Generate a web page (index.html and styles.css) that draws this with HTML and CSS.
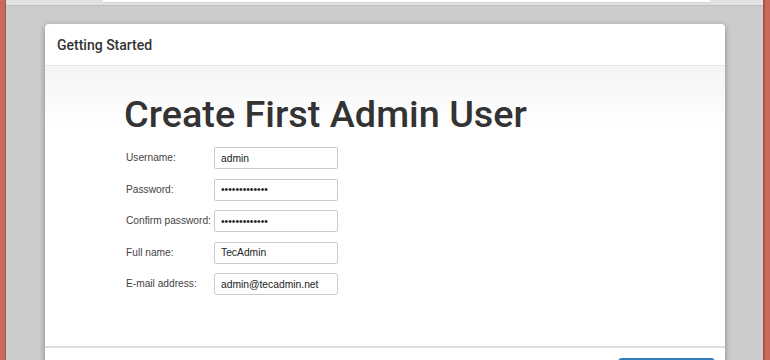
FILE: index.html
```html
<!DOCTYPE html>
<html lang="en">

<head>
    <meta charset="UTF-8">
    <meta name="viewport" content="width=device-width, initial-scale=1.0">
    <title>Getting Started</title>
    <link rel="stylesheet" href="styles.css">
</head>

<body>
    <div class="window">
        <div class="toolbar">
            <div class="urlbar"></div>
        </div>

        <div class="dialog">
            <div class="dialog-header">Getting Started</div>

            <div class="dialog-body">
                <h1>Create First Admin User</h1>

                <form class="admin-form">
                    <label for="username">Username:</label>
                    <input type="text" id="username" value="admin">

                    <label for="password1">Password:</label>
                    <input type="password" id="password1" value="tecadmin12345">

                    <label for="password2">Confirm password:</label>
                    <input type="password" id="password2" value="tecadmin12345">

                    <label for="fullname">Full name:</label>
                    <input type="text" id="fullname" value="TecAdmin">

                    <label for="email">E-mail address:</label>
                    <input type="text" id="email" value="admin@tecadmin.net">
                </form>
            </div>

            <div class="dialog-footer">
                <!-- tombol simpan, hanya bagian atasnya yang terlihat -->
                <button class="save-btn" aria-label="Save and Finish"></button>
            </div>
        </div>
    </div>
</body>

</html>
```

FILE: styles.css
```css
/* halaman setup admin */
body {
    margin: 0;
    height: 360px;
    overflow: hidden;
    background-color: #c86a5b;
    font-family: "Liberation Sans", Arial, sans-serif;
}

.window {
    margin: 0 5px;
    height: 360px;
    overflow: hidden;
    background-color: #cccccc;
    border-left: 1px solid #a85548;
    border-right: 2px solid #a85548;
    box-sizing: border-box;
}

.toolbar {
    height: 5px;
    background-color: #e2e2e2;
    border-bottom: 1px solid #c0c0c0;
}

.urlbar {
    margin-left: 97px;
    width: 607px;
    height: 2px;
    background-color: #ffffff;
    border-bottom: 1px solid #d6d6d6;
}

.dialog {
    margin: 18px 38px 0 39px;
    background-color: #ffffff;
    border-radius: 4px 4px 0 0;
    box-shadow: 0 2px 6px rgba(0, 0, 0, 0.35);
}

.dialog-header {
    height: 41px;
    padding: 0 12px;
    display: flex;
    align-items: center;
    font-family: Roboto, "Liberation Sans", sans-serif;
    font-size: 14px;
    font-weight: 500;
    color: #333333;
    border-bottom: 1px solid #e5e5e5;
}

.dialog-body {
    height: 280px;
    padding: 0 0 0 79px;
    box-sizing: border-box;
    background: linear-gradient(to bottom, #f4f4f4 0px, #ffffff 60px);
}

.dialog-body h1 {
    margin: 0;
    padding-top: 25px;
    font-family: Roboto, "Liberation Sans", sans-serif;
    font-size: 37.8px;
    font-weight: 500;
    line-height: 46px;
    color: #333333;
}

.admin-form {
    display: grid;
    grid-template-columns: 88px 124px;
    row-gap: 9.5px;
    margin: 10px 0 0 2px;
}

.admin-form label {
    font-size: 10.2px;
    color: #444444;
    padding-top: 5px;
    white-space: nowrap;
}

.admin-form input {
    height: 22px;
    box-sizing: border-box;
    border: 1px solid #cccccc;
    border-radius: 2px;
    padding: 0 6px;
    font-family: "Liberation Sans", Arial, sans-serif;
    font-size: 10.3px;
    color: #222222;
    background-color: #ffffff;
}

.dialog-footer {
    border-top: 2px solid #dddddd;
    height: 20px;
    padding: 10px 10px 0 0;
    display: flex;
    justify-content: flex-end;
}

.save-btn {
    width: 97px;
    height: 30px;
    border: none;
    border-radius: 4px;
    background-color: #337ab7;
}
```
